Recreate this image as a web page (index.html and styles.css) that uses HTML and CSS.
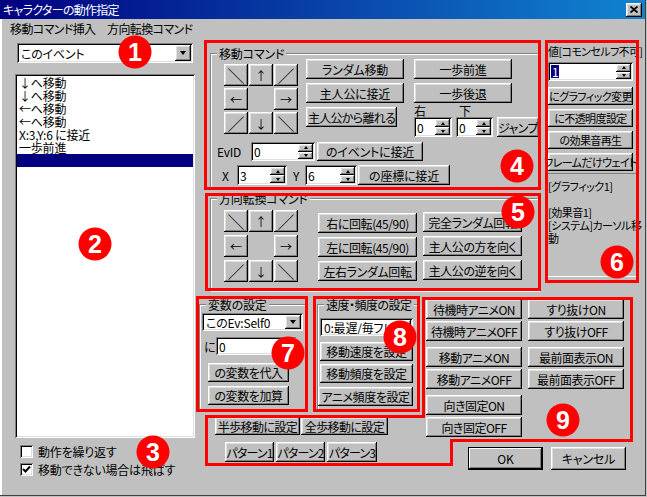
FILE: index.html
```html
<!DOCTYPE html>
<html lang="ja">
<head>
<meta charset="utf-8">
<title>キャラクターの動作指定</title>
<link rel="stylesheet" href="styles.css">
</head>
<body>
<div class="window">
  <div class="titlebar">
    <span class="title">キャラクターの動作指定</span>
    <span class="close"><svg width="8" height="7" viewBox="0 0 8 7"><path d="M0.5 0.5L7.5 6.5M7.5 0.5L0.5 6.5" stroke="#000" stroke-width="1.8" fill="none"/></svg></span>
  </div>
  <div class="menubar">
    <span class="menu-item first">移動コマンド挿入</span>
    <span class="menu-item">方向転換コマンド</span>
  </div>
  <div class="main">
    <div class="left">
      <div class="combo target"><span class="val">このイベント</span><span class="drop"></span></div>
      <div class="list">
        <div class="item">↓へ移動</div>
        <div class="item">↓へ移動</div>
        <div class="item">←へ移動</div>
        <div class="item">←へ移動</div>
        <div class="item">X:3,Y:6 に接近</div>
        <div class="item">一歩前進</div>
        <div class="item sel"></div>
      </div>
      <div class="check c1"><span class="box"></span><span>動作を繰り返す</span></div>
      <div class="check c2"><span class="box"><svg width="9" height="9" viewBox="0 0 9 9"><path d="M1 4L3.5 6.5L8 1.5" stroke="#000" stroke-width="2" fill="none"/></svg></span><span>移動できない場合は飛ばす</span></div>
    </div>

    <div class="right">
      <div class="upper">
        <div class="groups">
          <fieldset class="group move">
            <legend>移動コマンド</legend>
            <div class="move-top">
              <div class="arrows">
                <span class="btn ar">＼</span><span class="btn">↑</span><span class="btn ar">／</span>
                <span class="btn">←</span><span class="gap-cell"></span><span class="btn">→</span>
                <span class="btn ar">／</span><span class="btn">↓</span><span class="btn ar">＼</span>
              </div>
              <div class="mcol">
                <span class="btn">ランダム移動</span>
                <span class="btn">主人公に接近</span>
                <span class="btn short">主人公から離れる</span>
              </div>
              <div class="rcol">
                <span class="btn">一歩前進</span>
                <span class="btn">一歩後退</span>
                <div class="lbls"><span class="l-r">右</span><span>下</span></div>
                <div class="spinrow">
                  <div class="spin w38"><span class="v">0</span><span class="ud"><i class="up"></i><i class="dn"></i></span></div>
                  <div class="spin w37"><span class="v">0</span><span class="ud"><i class="up"></i><i class="dn"></i></span></div>
                  <span class="btn jump">ジャンプ</span>
                </div>
              </div>
            </div>
            <div class="ev-row">
              <span class="lbl evid">EvID</span>
              <div class="spin w64"><span class="v">0</span><span class="ud"><i class="up"></i><i class="dn"></i></span></div>
              <span class="btn w106">のイベントに接近</span>
            </div>
            <div class="xy-row">
              <span class="lbl lx">X</span>
              <div class="spin w50"><span class="v">3</span><span class="ud"><i class="up"></i><i class="dn"></i></span></div>
              <span class="lbl ly">Y</span>
              <div class="spin w52"><span class="v">6</span><span class="ud"><i class="up"></i><i class="dn"></i></span></div>
              <span class="btn w92">の座標に接近</span>
            </div>
          </fieldset>

          <fieldset class="group turn">
            <legend>方向転換コマンド</legend>
            <div class="turn-row">
              <div class="arrows t">
                <span class="btn ar">＼</span><span class="btn">↑</span><span class="btn ar">／</span>
                <span class="btn">←</span><span class="gap-cell"></span><span class="btn">→</span>
                <span class="btn ar">／</span><span class="btn">↓</span><span class="btn ar">＼</span>
              </div>
              <div class="tcol1">
                <span class="btn">右に回転(45/90)</span>
                <span class="btn">左に回転(45/90)</span>
                <span class="btn">左右ランダム回転</span>
              </div>
              <div class="tcol2">
                <span class="btn">完全ランダム回転</span>
                <span class="btn">主人公の方を向く</span>
                <span class="btn">主人公の逆を向く</span>
              </div>
            </div>
          </fieldset>
        </div>

        <div class="valcol">
          <div class="vlabel">値[コモンセルフ不可]</div>
          <div class="spin vspin"><span class="v"><span class="hl">1</span></span><span class="ud"><i class="up"></i><i class="dn"></i></span></div>
          <span class="btn vb">にグラフィック変更</span>
          <span class="btn vb">に不透明度設定</span>
          <span class="btn vb">の効果音再生</span>
          <span class="btn vb">フレームだけウェイト</span>
          <div class="vpanel">[グラフィック1]<br><br>[効果音1]<br>[システム]カーソル移<br>動</div>
        </div>
      </div>

      <div class="lower">
        <div class="lower-left">
          <div class="sets">
            <fieldset class="group var">
              <legend>変数の設定</legend>
              <div class="combo vcombo"><span class="val">このEv:Self0</span><span class="drop"></span></div>
              <div class="ni-row"><span class="lbl ni">に</span><div class="edit">0</div></div>
              <span class="btn vbtn first">の変数を代入</span>
              <span class="btn vbtn">の変数を加算</span>
            </fieldset>
            <fieldset class="group speed">
              <legend>速度・頻度の設定</legend>
              <div class="combo scombo"><span class="val">0:最遅/毎フレーム</span><span class="drop"></span></div>
              <span class="btn sbtn s1">移動速度を設定</span>
              <span class="btn sbtn s2">移動頻度を設定</span>
              <span class="btn sbtn s3">アニメ頻度を設定</span>
            </fieldset>
          </div>
          <div class="steprow">
            <span class="btn w85">半歩移動に設定</span>
            <span class="btn w87">全歩移動に設定</span>
          </div>
          <div class="patrow">
            <span class="btn w49">パターン1</span>
            <span class="btn w49">パターン2</span>
            <span class="btn w50">パターン3</span>
          </div>
        </div>

        <div class="lower-right">
          <div class="flags">
            <div class="pair">
              <span class="btn">待機時アニメON</span><span class="btn">すり抜けON</span>
              <span class="btn">待機時アニメOFF</span><span class="btn">すり抜けOFF</span>
            </div>
            <div class="pair">
              <span class="btn">移動アニメON</span><span class="btn">最前面表示ON</span>
              <span class="btn">移動アニメOFF</span><span class="btn">最前面表示OFF</span>
            </div>
            <div class="pair">
              <span class="btn">向き固定ON</span><span></span>
              <span class="btn">向き固定OFF</span><span></span>
            </div>
          </div>
          <div class="okrow">
            <span class="btn dlg ok">OK</span>
            <span class="btn dlg">キャンセル</span>
          </div>
        </div>
      </div>
    </div>
  </div>

  <svg class="marks" width="647" height="497" viewBox="0 0 647 497">
    <g fill="none" stroke="#ff0000" stroke-width="3">
      <rect x="205.5" y="41.5" width="334" height="147"/>
      <rect x="206.5" y="194.5" width="333" height="95"/>
      <rect x="546.5" y="41.5" width="91" height="240"/>
      <rect x="197.5" y="297.5" width="109" height="113"/>
      <rect x="314.5" y="297.5" width="104" height="113"/>
      <polygon points="423.5,298.5 631.5,298.5 631.5,440.5 451.5,440.5 451.5,464.5 206.5,464.5 206.5,416.5 423.5,416.5"/>
    </g>
    <g fill="#ff0000">
      <circle cx="135" cy="52" r="16.5"/>
      <circle cx="95" cy="244" r="16.5"/>
      <circle cx="153" cy="452" r="16.5"/>
      <circle cx="517" cy="166" r="16.5"/>
      <circle cx="518" cy="212" r="16.5"/>
      <circle cx="617" cy="262" r="16.5"/>
      <circle cx="288" cy="353" r="16.5"/>
      <circle cx="400" cy="337" r="16.5"/>
      <circle cx="563" cy="420" r="16.5"/>
    </g>
    <g class="nums" fill="#fff" text-anchor="middle">
      <text x="135" y="61">1</text>
      <text x="95" y="253">2</text>
      <text x="153" y="461">3</text>
      <text x="517" y="175">4</text>
      <text x="518" y="221">5</text>
      <text x="617" y="271">6</text>
      <text x="288" y="362">7</text>
      <text x="400" y="346">8</text>
      <text x="563" y="429">9</text>
    </g>
  </svg>
</div>
</body>
</html>
```

FILE: styles.css
```css
* { box-sizing: border-box; }

body {
  margin: 0;
  background: #c0c0c0;
  font-family: "Noto Sans CJK JP", "Noto Sans CJK SC", sans-serif;
  font-size: 12px;
  line-height: 13px;
  letter-spacing: -0.2px;
  font-feature-settings: "palt";
  color: #000;
}

.window {
  position: relative;
  width: 647px;
  height: 497px;
  background: #c0c0c0;
  display: flex;
  flex-direction: column;
  overflow: hidden;
  box-shadow: inset -1px -1px #c0c0c0, inset -2px -2px #404040, inset 2px 0 #fff;
}

/* ---------- bevels ---------- */
.btn, .close, .drop, .ud i {
  background: #c0c0c0;
  box-shadow: inset -1px -1px #000, inset 1px 1px #fff, inset -2px -2px #808080, inset 2px 2px #dfdfdf;
}
.spin, .combo, .list, .edit, .box {
  background: #fff;
  box-shadow: inset 1px 1px #808080, inset -1px -1px #fff, inset 2px 2px #000, inset -2px -2px #dfdfdf;
}

/* ---------- title & menu ---------- */
.titlebar {
  height: 19px;
  margin-right: 2px;
  padding-left: 3px;
  display: flex;
  align-items: center;
  color: #fff;
  background: linear-gradient(to right, #000080, #1084d0);
}
.titlebar .title { flex: 1; letter-spacing: -0.7px; }
.close {
  width: 16px;
  height: 14px;
  margin-right: 3px;
  display: flex;
  align-items: center;
  justify-content: center;
}

.menubar {
  height: 18px;
  padding-left: 10px;
  display: flex;
  align-items: center;
  letter-spacing: -0.6px;
}
.menu-item.first { width: 97px; }

/* ---------- layout ---------- */
.main {
  flex: 1;
  display: flex;
  padding-left: 15px;
}

.left {
  width: 180px;
  display: flex;
  flex-direction: column;
}

.right {
  margin-left: 4px;
  width: 442px;
  display: flex;
  flex-direction: column;
}

/* ---------- generic controls ---------- */
.btn {
  height: 20px;
  display: flex;
  align-items: center;
  justify-content: center;
  white-space: nowrap;
  padding: 0;
}

.combo {
  height: 20px;
  padding: 2px;
  display: flex;
}
.combo .val {
  flex: 1;
  padding-left: 2px;
  display: flex;
  align-items: center;
  white-space: nowrap;
  overflow: hidden;
}
.drop {
  width: 16px;
  flex: none;
  display: flex;
  align-items: center;
  justify-content: center;
}
.drop::after {
  content: "";
  border-left: 3.5px solid transparent;
  border-right: 3.5px solid transparent;
  border-top: 4px solid #000;
}

.spin {
  height: 20px;
  padding: 2px;
  display: flex;
}
.spin .v {
  flex: 1;
  padding-left: 1px;
  display: flex;
  align-items: center;
}
.ud {
  width: 15px;
  display: flex;
  flex-direction: column;
}
.ud i {
  flex: 1;
  display: flex;
  align-items: center;
  justify-content: center;
}
.ud i.up::after {
  content: "";
  border-left: 2.5px solid transparent;
  border-right: 2.5px solid transparent;
  border-bottom: 3px solid #000;
}
.ud i.dn::after {
  content: "";
  border-left: 2.5px solid transparent;
  border-right: 2.5px solid transparent;
  border-top: 3px solid #000;
}

.edit {
  height: 18px;
  padding: 2px 3px;
  display: flex;
  align-items: center;
}

.lbl { display: block; }

.group {
  margin: 0;
  padding: 0;
  min-width: 0;
  border: 1px solid #808080;
  box-shadow: 1px 1px 0 #fff, inset 1px 1px 0 #fff;
}
.group legend {
  margin-left: 6px;
  padding: 0 2px;
  line-height: 13px;
  background: #c0c0c0;
}

/* ---------- left column ---------- */
.combo.target {
  margin-top: 6px;
  margin-left: 2px;
  width: 176px;
}

.list {
  margin-top: 11px;
  height: 364px;
  padding: 2px;
}
.item {
  height: 13px;
  padding-left: 2px;
  white-space: nowrap;
}
.item.sel { background: #000080; }

.check {
  display: flex;
  align-items: center;
  margin-left: 5px;
  height: 13px;
}
.check .box {
  width: 13px;
  height: 13px;
  margin-right: 5px;
  display: flex;
  align-items: center;
  justify-content: center;
}
.check.c1 { margin-top: 7px; }
.check.c2 { margin-top: 5px; }

/* ---------- upper right ---------- */
.upper {
  margin-top: 6px;
  display: flex;
  align-items: flex-start;
}
.groups {
  margin-left: 11px;
  width: 329px;
  padding-top: 4px;
}

.move { height: 141px; }

.move-top {
  margin-top: -1px;
  display: flex;
  align-items: flex-start;
}
.arrows {
  margin-left: 13px;
  margin-top: 5px;
  display: grid;
  grid-template-columns: repeat(3, 24px);
  grid-auto-rows: 22px;
  column-gap: 1px;
  row-gap: 2px;
}
.arrows .btn { height: 22px; }
.arrows.t { row-gap: 3px; }
.btn.ar { font-size: 17px; font-weight: 300; }

.mcol {
  margin-left: 8px;
  width: 98px;
  display: flex;
  flex-direction: column;
  gap: 4px;
}
.mcol .btn.short { width: 91px; letter-spacing: -0.7px; }

.rcol {
  margin-left: 10px;
  width: 98px;
  display: flex;
  flex-direction: column;
}
.rcol > .btn + .btn { margin-top: 4px; }
.lbls {
  height: 14px;
  display: flex;
  align-items: flex-end;
}
.lbls .l-r { width: 45px; }
.spinrow {
  display: flex;
  width: 130px;
}
.w38 { width: 38px; }
.w37 { width: 37px; margin-left: 4px; }
.jump { width: 42px; margin-left: 4px; letter-spacing: -0.6px; }

.ev-row {
  margin-top: 5px;
  height: 19px;
  display: flex;
  align-items: center;
}
.ev-row .spin, .ev-row .btn { height: 19px; }
.evid { margin-left: 6px; width: 34px; }
.w64 { width: 64px; }
.w106 { width: 106px; margin-left: 2px; }

.xy-row {
  margin-top: 4px;
  height: 20px;
  display: flex;
  align-items: center;
}
.lx { margin-left: 11px; width: 15px; }
.ly { margin-left: 6px; width: 12px; }
.w50 { width: 50px; }
.w52 { width: 52px; }
.w92 { width: 92px; margin-left: 1px; }

.turn {
  margin-top: 4px;
  height: 99px;
}
.turn-row {
  display: flex;
  align-items: flex-start;
}
.tcol1, .tcol2 {
  width: 99px;
  display: flex;
  flex-direction: column;
  gap: 4px;
  letter-spacing: -0.4px;
}
.tcol1 { margin-left: 20px; margin-top: 8px; }
.tcol2 { margin-left: 6px; margin-top: 7px; }

.valcol {
  margin-left: 9px;
  width: 88px;
  padding-top: 2px;
  display: flex;
  flex-direction: column;
}
.vlabel {
  white-space: nowrap;
  font-size: 11px;
  letter-spacing: -0.6px;
}
.vspin {
  margin-top: 4px;
  width: 85px;
  height: 19px;
}
.hl {
  background: #000080;
  color: #fff;
  padding: 0 1px;
}
.btn.vb {
  width: 85px;
  height: 18px;
  margin-top: 4px;
  font-size: 11px;
  letter-spacing: -0.6px;
}
.vspin + .btn.vb { margin-top: 6px; }
.vpanel {
  margin-top: 2px;
  height: 104px;
  padding-top: 6px;
  border-top: 1px solid #808080;
  border-bottom: 1px solid #fff;
  white-space: nowrap;
  font-size: 11px;
  letter-spacing: -0.5px;
}

/* ---------- lower ---------- */
.lower {
  margin-top: 7px;
  display: flex;
}
.lower-left {
  width: 221px;
  display: flex;
  flex-direction: column;
}
.sets { display: flex; }

.var {
  width: 107px;
  height: 113px;
}
.vcombo {
  margin-left: 2px;
  margin-top: 2px;
  width: 101px;
  height: 18px;
}
.ni-row {
  margin-top: 6px;
  display: flex;
  align-items: center;
}
.ni { margin-left: 4px; width: 12px; }
.ni-row .edit { width: 80px; }
.btn.vbtn {
  margin-left: 8px;
  width: 81px;
  height: 19px;
  margin-top: 4px;
  letter-spacing: -0.4px;
}
.btn.vbtn.first { margin-top: 8px; }

.speed {
  margin-left: 11px;
  width: 102px;
  height: 113px;
}
.speed legend { letter-spacing: -0.5px; }
.scombo {
  margin-left: 2px;
  margin-top: 7px;
  width: 93px;
  height: 18px;
}
.btn.sbtn {
  margin-left: 2px;
  width: 93px;
  height: 19px;
  letter-spacing: -0.4px;
}
.btn.s1 { margin-top: 6px; }
.btn.s2 { margin-top: 3px; }
.btn.s3 { margin-top: 4px; margin-left: 0; width: 95px; }

.steprow {
  margin-top: 6px;
  margin-left: 16px;
  display: flex;
  letter-spacing: -0.6px;
}
.steprow .btn { height: 18px; }
.w85 { width: 85px; }
.w87 { width: 87px; margin-left: 1px; }

.patrow {
  margin-top: 7px;
  margin-left: 26px;
  display: flex;
  gap: 2px;
  letter-spacing: -0.8px;
}
.w49 { width: 49px; }
.w50 { width: 50px; }

.lower-right {
  margin-left: 6px;
  width: 200px;
  display: flex;
  flex-direction: column;
}
.flags {
  margin-top: 1px;
  display: flex;
  flex-direction: column;
  gap: 6px;
  letter-spacing: -0.5px;
}
.pair {
  display: grid;
  grid-template-columns: 96px 96px;
  grid-auto-rows: 20px;
  column-gap: 6px;
  row-gap: 2px;
}

.okrow {
  margin-top: 10px;
  margin-left: 42px;
  display: flex;
  gap: 8px;
}
.btn.dlg { width: 75px; height: 23px; }
.btn.ok {
  box-shadow: inset 0 0 0 1px #000, inset -2px -2px #000, inset 2px 2px #fff, inset -3px -3px #808080;
}

/* ---------- annotation overlay ---------- */
.marks {
  position: absolute;
  left: 0;
  top: 0;
  pointer-events: none;
}
.nums text {
  font-family: "Liberation Sans", Arial, sans-serif;
  font-weight: bold;
  font-size: 25px;
  letter-spacing: 0;
}
```
